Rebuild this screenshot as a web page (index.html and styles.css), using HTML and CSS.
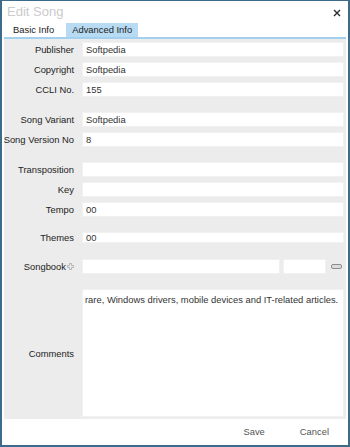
FILE: index.html
```html
<!DOCTYPE html>
<html lang="en">
<head>
  <meta charset="UTF-8" />
  <title>Edit Song</title>
  <link rel="stylesheet" href="styles.css">
</head>
<body>
  <div class="window">
    <div class="titlebar">
      <span class="title">Edit Song</span>
      <svg class="close" width="8" height="8" viewBox="0 0 8 8">
        <path d="M1 1 L7 7 M7 1 L1 7" stroke="#2a2a2a" stroke-width="1.4" />
      </svg>
    </div>
    <div class="tabs">
      <span class="tab">Basic Info</span>
      <span class="tab active">Advanced Info</span>
    </div>
    <div class="panel">
      <div class="row"><label>Publisher</label><div class="field">Softpedia</div></div>
      <div class="row"><label>Copyright</label><div class="field">Softpedia</div></div>
      <div class="row"><label>CCLI No.</label><div class="field">155</div></div>

      <div class="row sep"><label>Song Variant</label><div class="field">Softpedia</div></div>
      <div class="row"><label>Song Version No</label><div class="field">8</div></div>

      <div class="row sep"><label>Transposition</label><div class="field"></div></div>
      <div class="row"><label>Key</label><div class="field"></div></div>
      <div class="row"><label>Tempo</label><div class="field">00</div></div>

      <div class="row sep short"><label>Themes</label><div class="field">00</div></div>

      <div class="row sep wide">
        <label>Songbook<svg class="move" width="7" height="7" viewBox="0 0 7 7">
          <path d="M2.5 0.5 H4.5 V2.5 H6.5 V4.5 H4.5 V6.5 H2.5 V4.5 H0.5 V2.5 H2.5 Z" fill="none" stroke="#a8a8a8" stroke-width="0.8" />
        </svg></label>
        <div class="songbook">
          <div class="field"></div>
          <div class="field num"></div>
          <span class="pill"></span>
        </div>
      </div>

      <div class="row sep comments">
        <label>Comments</label>
        <div class="field memo">rare, Windows drivers, mobile devices and IT-related articles.</div>
      </div>
    </div>
    <div class="footer">
      <span class="btn">Save</span>
      <span class="btn">Cancel</span>
    </div>
  </div>
</body>
</html>
```
FILE: styles.css
```css
body {
  margin: 0;
  font-family: "Liberation Sans", Arial, sans-serif;
  font-size: 9.4px;
  color: #222;
  background: #fff;
}
.window {
  width: 350px;
  height: 447px;
  box-sizing: border-box;
  border: 2px solid #3f6b8a;
  border-top-width: 1px;
  display: flex;
  flex-direction: column;
}
.titlebar {
  height: 22px;
  display: flex;
  align-items: center;
  justify-content: space-between;
  padding: 0 7px 0 5px;
}
.title {
  font-size: 13px;
  color: #cbcbcb;
  margin-top: -1px;
}
.close {
  margin-top: 2px;
}
.tabs {
  display: flex;
  gap: 6px;
  margin: 0 2px;
  padding-left: 3px;
  height: 14px;
  border-bottom: 2px solid #a3d0ee;
}
.tab {
  padding: 0 6px;
  line-height: 14px;
}
.tab.active {
  background: #b7dbf3;
}
.panel {
  margin: 0 2px;
  background: #ececec;
  padding: 3px 2px 2px 0;
  display: flex;
  flex-direction: column;
  gap: 5px;
}
.row {
  display: grid;
  grid-template-columns: 78px 1fr;
  height: 15px;
  align-items: center;
}
.row.sep {
  margin-top: 10px;
}
.row.wide {
  margin-top: 11px;
}
.row.short {
  height: 11px;
}
.row label {
  display: flex;
  justify-content: flex-end;
  align-items: center;
  gap: 1px;
  padding-right: 8px;
  white-space: nowrap;
}
.field {
  height: 100%;
  box-sizing: border-box;
  background: #fff;
  border: 1px solid #f1f1f1;
  padding-left: 3px;
  line-height: 13px;
  color: #333;
  overflow: hidden;
  white-space: nowrap;
}
.row.short .field {
  line-height: 9px;
}
.songbook {
  display: flex;
  align-items: center;
  gap: 3px;
  height: 100%;
}
.songbook .field {
  flex: 1;
}
.songbook .field.num {
  flex: 0 0 43px;
}
.pill {
  width: 9px;
  height: 3px;
  margin: 0 2px 0 2px;
  border: 1px solid #8c8c8c;
  border-radius: 2px;
  background: #dcdcdc;
}
.row.comments {
  height: 128px;
  align-items: center;
}
.field.memo {
  padding-top: 3px;
  padding-left: 2px;
}
.footer {
  flex: 1;
  display: flex;
  justify-content: flex-end;
  align-items: center;
  gap: 35px;
  padding: 0 19px 2px 0;
}
.btn {
  color: #555;
}
```
